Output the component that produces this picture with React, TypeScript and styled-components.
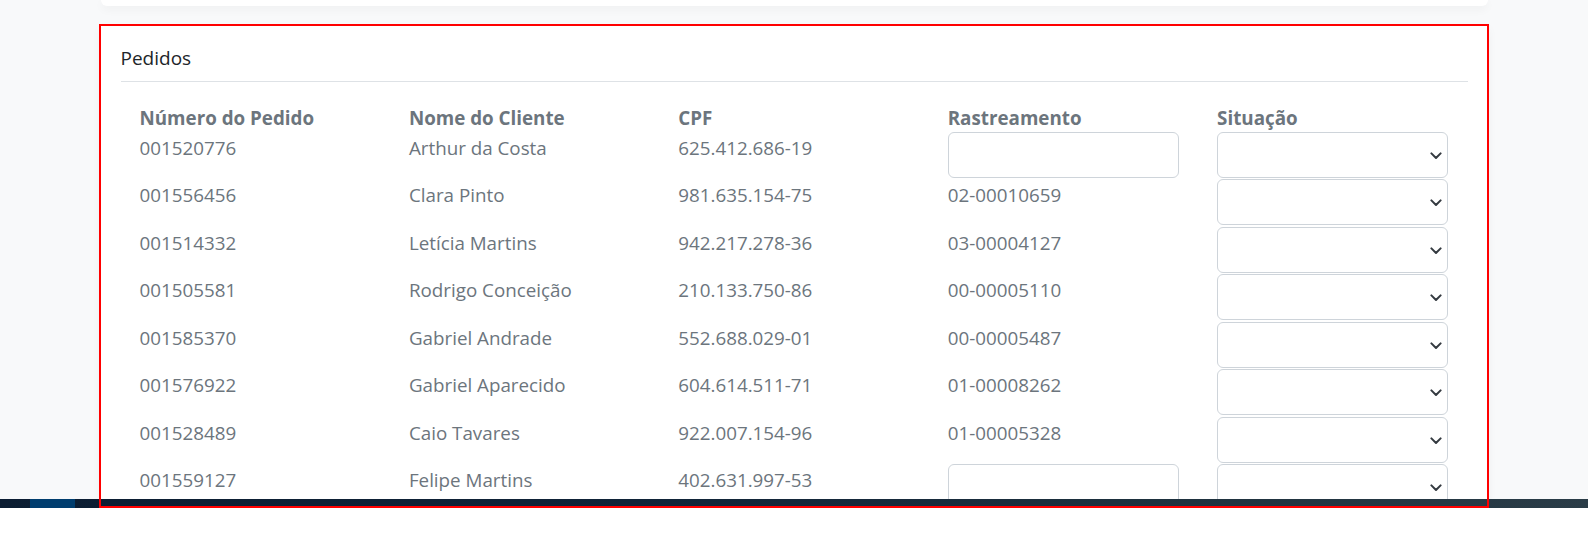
import React from "react";
import styled, { createGlobalStyle } from "styled-components";

const GlobalStyle = createGlobalStyle`
  html, body {
    margin: 0;
    padding: 0;
    background: #ffffff;
  }
  body {
    font-family: "Open Sans", "Noto Sans", sans-serif;
  }
  * {
    box-sizing: border-box;
  }
`;

const Screen = styled.div`
  position: relative;
  height: 533px;
  overflow: hidden;
  display: flex;
  flex-direction: column;
  background: #ffffff;
`;

const Viewport = styled.div`
  height: 499px;
  overflow: hidden;
  background: #f8f9fa;
`;

const Container = styled.div`
  width: 1387px;
  margin: 0 auto;
`;

const TopCard = styled.div`
  height: 6px;
  background: #ffffff;
  border-radius: 0 0 6px 6px;
  box-shadow: 0 3px 10px rgba(0, 0, 0, 0.05);
  margin-bottom: 20px;
`;

const Card = styled.section`
  background: #ffffff;
  padding: 18.4px 20px 24px;
  box-shadow: 0 3px 10px rgba(0, 0, 0, 0.05);
`;

const CardTitle = styled.h5`
  margin: 0 0 8.1px;
  font-size: 19px;
  font-weight: 500;
  line-height: 1.5;
  color: #212529;
`;

const Divider = styled.hr`
  margin: 0 0 21.6px;
  border: 0;
  border-top: 1px solid #dee2e6;
`;

const Table = styled.div`
  display: flex;
  flex-direction: column;
`;

const Row = styled.div<{ $height: number }>`
  display: grid;
  grid-template-columns: repeat(5, 1fr);
  height: ${(p) => p.$height}px;
`;

const HeaderCell = styled.div`
  padding: 0 19px;
  font-size: 18.8px;
  font-weight: 700;
  line-height: 1.5;
  color: #6c757d;
  white-space: nowrap;
`;

const Cell = styled.div<{ $control?: boolean }>`
  padding: ${(p) => (p.$control ? "0 19px" : "2px 19px 0")};
  font-size: 18.8px;
  line-height: 1.5;
  color: #6c757d;
  white-space: nowrap;
`;

const TextInput = styled.input`
  display: block;
  width: 100%;
  height: 46px;
  padding: 6px 12px;
  font: inherit;
  color: #212529;
  background: #ffffff;
  border: 1px solid #ced4da;
  border-radius: 6px;
  outline: none;
`;

const SelectWrap = styled.div`
  position: relative;
  height: 46px;
`;

const Select = styled.select`
  display: block;
  width: 100%;
  height: 46px;
  padding: 6px 36px 6px 12px;
  font: inherit;
  color: #212529;
  background: #ffffff;
  border: 1px solid #ced4da;
  border-radius: 6px;
  appearance: none;
  -webkit-appearance: none;
  outline: none;
`;

const Chevron = styled.svg`
  position: absolute;
  right: 6px;
  top: 50%;
  margin-top: -3px;
  pointer-events: none;
`;

const Taskbar = styled.div`
  position: relative;
  height: 9px;
  background: linear-gradient(90deg, #0b1d32 0%, #102338 40%, #1f323f 75%, #2a3c47 100%);
`;

const StartTile = styled.div`
  position: absolute;
  left: 30px;
  top: 0;
  width: 45px;
  height: 100%;
  background: #003d6e;
`;

const Blank = styled.div`
  flex: 1;
  background: #ffffff;
`;

const Highlight = styled.div`
  position: absolute;
  top: 24px;
  left: 99px;
  width: 1390px;
  height: 484px;
  border: 2px solid #ff0000;
  pointer-events: none;
`;

type Order = {
  numero: string;
  cliente: string;
  cpf: string;
  rastreamento?: string;
};

const orders: Order[] = [
  { numero: "001520776", cliente: "Arthur da Costa", cpf: "625.412.686-19" },
  { numero: "001556456", cliente: "Clara Pinto", cpf: "981.635.154-75", rastreamento: "02-00010659" },
  { numero: "001514332", cliente: "Letícia Martins", cpf: "942.217.278-36", rastreamento: "03-00004127" },
  { numero: "001505581", cliente: "Rodrigo Conceição", cpf: "210.133.750-86", rastreamento: "00-00005110" },
  { numero: "001585370", cliente: "Gabriel Andrade", cpf: "552.688.029-01", rastreamento: "00-00005487" },
  { numero: "001576922", cliente: "Gabriel Aparecido", cpf: "604.614.511-71", rastreamento: "01-00008262" },
  { numero: "001528489", cliente: "Caio Tavares", cpf: "922.007.154-96", rastreamento: "01-00005328" },
  { numero: "001559127", cliente: "Felipe Martins", cpf: "402.631.997-53" },
];

function StatusSelect() {
  return (
    <SelectWrap>
      <Select defaultValue="">
        <option value=""></option>
        <option value="enviado">Enviado</option>
        <option value="entregue">Entregue</option>
      </Select>
      <Chevron width="12" height="8" viewBox="0 0 12 8">
        <path d="M1.4 1.4 L6 6 L10.6 1.4" fill="none" stroke="#343a40" strokeWidth="2" strokeLinecap="round" strokeLinejoin="round" />
      </Chevron>
    </SelectWrap>
  );
}

export default function App() {
  return (
    <>
      <GlobalStyle />
      <Screen>
        <Viewport>
          <Container>
            <TopCard />
            <Card>
              <CardTitle>Pedidos</CardTitle>
              <Divider />
              <Table>
                <Row $height={28.4}>
                  <HeaderCell>Número do Pedido</HeaderCell>
                  <HeaderCell>Nome do Cliente</HeaderCell>
                  <HeaderCell>CPF</HeaderCell>
                  <HeaderCell>Rastreamento</HeaderCell>
                  <HeaderCell>Situação</HeaderCell>
                </Row>
                {orders.map((order) => (
                  <Row $height={47.5} key={order.numero}>
                    <Cell>{order.numero}</Cell>
                    <Cell>{order.cliente}</Cell>
                    <Cell>{order.cpf}</Cell>
                    {order.rastreamento ? (
                      <Cell>{order.rastreamento}</Cell>
                    ) : (
                      <Cell $control>
                        <TextInput type="text" />
                      </Cell>
                    )}
                    <Cell $control>
                      <StatusSelect />
                    </Cell>
                  </Row>
                ))}
              </Table>
            </Card>
          </Container>
        </Viewport>
        <Taskbar>
          <StartTile />
        </Taskbar>
        <Blank />
        <Highlight />
      </Screen>
    </>
  );
}
